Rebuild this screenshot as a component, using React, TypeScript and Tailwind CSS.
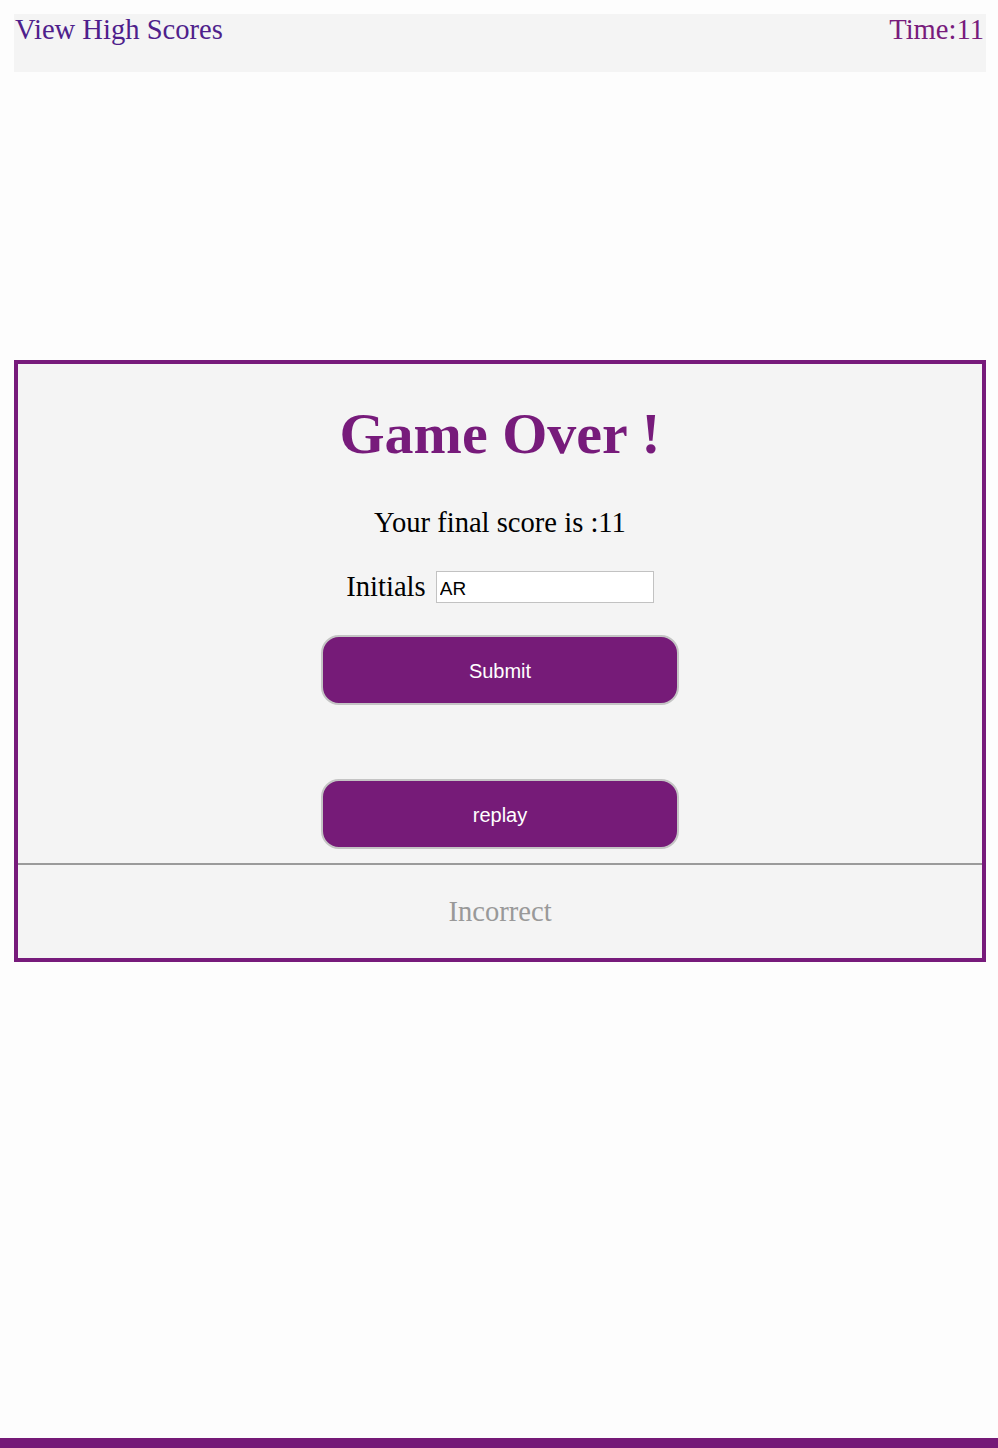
import React, { useState } from 'react';

const serif = { fontFamily: '"Liberation Serif", "Times New Roman", serif' };
const sans = { fontFamily: '"Liberation Sans", Arial, sans-serif' };

const App: React.FC = () => {
  const [initials, setInitials] = useState('AR');

  return (
    <div className="min-h-screen flex flex-col bg-[#fdfdfd]" style={serif}>
      {/* Header */}
      <div className="ml-[14px] mr-[12px] mt-[14px] h-[58px] bg-[#f4f4f4] flex justify-between items-start text-[28.6px] leading-[32px]">
        <a className="text-[#4f1f8c] pl-px cursor-pointer">View High Scores</a>
        <span className="text-[#781b7c] pr-[2px]">Time:11</span>
      </div>

      {/* Card */}
      <div className="ml-[14px] mr-[12px] mt-[288px] border-4 border-[#771b7b] bg-[#f4f4f4]">
        <div className="flex flex-col items-center">
          <h1 className="mt-[38px] text-[58px] leading-[64px] font-bold text-[#771b7b]">Game Over !</h1>
          <p className="mt-[41px] text-[28.6px] leading-[32px] text-black">Your final score is :11</p>
          <div className="mt-[32px] flex items-center gap-[10px]">
            <label className="text-[28.6px] leading-[32px] text-black">Initials</label>
            <input
              value={initials}
              onChange={(e) => setInitials(e.target.value)}
              className="w-[218px] h-[32px] bg-white border border-[#c2c2c2] px-[3px] pt-[3px] text-[19px] text-black outline-none"
              style={sans}
            />
          </div>
          <button
            className="mt-[32px] w-[358px] h-[70px] rounded-[18px] border-2 border-[#c4c4c4] bg-[#761b78] text-white text-[20px] pt-px"
            style={sans}
          >
            Submit
          </button>
          <button
            className="mt-[74px] w-[358px] h-[70px] rounded-[18px] border-2 border-[#c4c4c4] bg-[#761b78] text-white text-[20px] pt-px"
            style={sans}
          >
            replay
          </button>
        </div>
        <div className="mt-[14px] h-[2px] bg-[#9a9a9a]" />
        <div className="h-[93px] flex items-center justify-center text-[28.6px] leading-[32px] text-[#999999]">
          Incorrect
        </div>
      </div>

      {/* Footer bar */}
      <div className="mt-auto h-[10px] bg-[#751a77]" />
    </div>
  );
};

export default App;
